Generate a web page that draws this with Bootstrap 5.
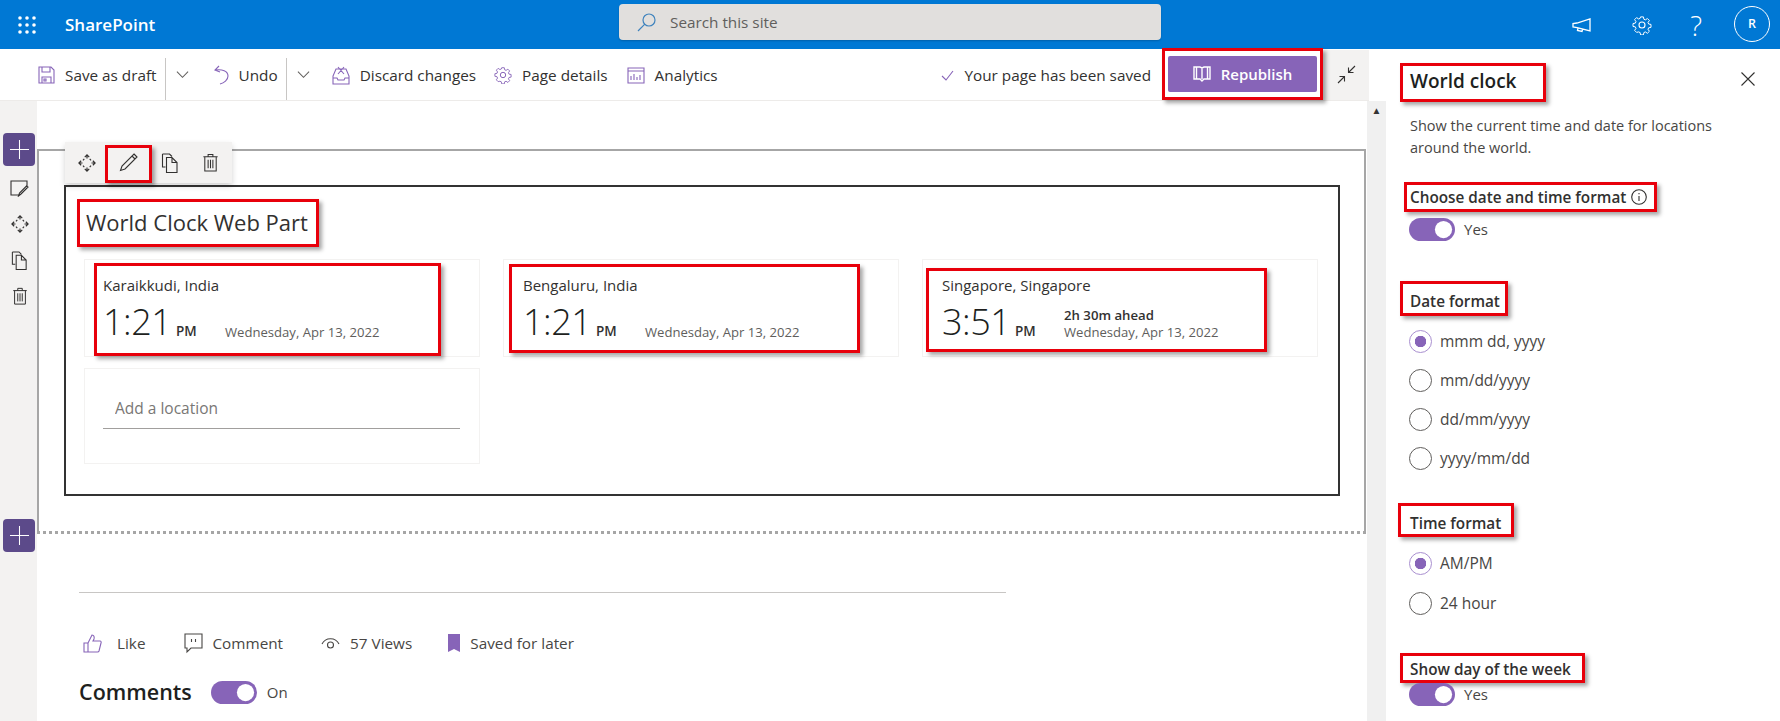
<!DOCTYPE html>
<html lang="en">
<head>
<meta charset="utf-8">
<title>World clock</title>
<link href="https://cdn.jsdelivr.net/npm/bootstrap@5.3.0/dist/css/bootstrap.min.css" rel="stylesheet">
<style>
html,body{height:721px;overflow:hidden;background:#fff}
body{font-family:"Open Sans","Noto Sans",sans-serif;color:#323130;font-size:14px}
svg{display:block;flex:none;fill:none;stroke:currentColor;stroke-width:1.1}
.sp-top{height:49px;background:#0078d4;color:#fff}
.sp-waffle{margin-left:18px;width:18px;height:18px;fill:#fff;stroke:none}
.sp-brand{margin-left:29px;font-size:17px;font-weight:600;width:200px;color:#fff}
.sp-search{margin-left:354px;margin-top:-5px;width:542px;height:36px;background:#e1dfdd;border-radius:4px;padding-left:18px;gap:14px;color:#605e5c;font-size:15.3px;box-shadow:0 1px 2px rgba(0,0,0,.2)}
.sp-search svg{color:#3f83bd;stroke-width:1.2}
.sp-topicons{margin-left:auto;padding-right:10px;gap:0}
.sp-ti1{margin-right:40px}
.sp-ti2{margin-right:38px}
.sp-ti3{margin-right:32px}
.sp-avatar{width:36px;height:36px;border:1px solid #fff;border-radius:50%;font-size:12.5px;font-weight:600;margin-top:-1px}
.sp-work{height:672px}
.sp-left{width:1386px}
.sp-bar{height:52px;width:1369px;border-bottom:1px solid #edebe9;padding-left:38px;font-size:15.3px}
.sp-bar svg{color:#8764b8}
.sp-tb{gap:10px;white-space:nowrap;padding-top:1px}
.sp-div{width:1px;height:42px;background:#c8c6c4;align-self:flex-end;margin-bottom:0}
.sp-chev{color:#605e5c !important}
.m-a{margin-left:8px}.m-c{margin-left:10px}.m-f{margin-left:25px}.m-f2{margin-left:22px}.m-g{margin-left:18px}.m-h{margin-left:19px}.m-i{margin-left:auto}
.sp-save{color:#323130}
.sp-redbar{width:161px;height:52px;border:3px solid #e8000b;margin-left:11px;margin-top:-1px;box-shadow:3px 3px 4px rgba(0,0,0,.35);position:relative;z-index:2;background:#fff}
.sp-btnpub{width:149px;height:36px;padding:0;background:#8764b8;border:0;border-radius:2px;color:#fff;font-weight:600;font-size:15px;gap:10px}
.sp-btnpub:hover{background:#8764b8;color:#fff}
.sp-bar .sp-btnpub svg{color:#fff}
.sp-shrink{width:46px;height:50px;background:#f3f2f1;color:#323130}
.sp-bar .sp-shrink svg{color:#323130}
.sp-canvasrow{height:620px}
.sp-rail{width:37px;background:#f3f2f1;padding-top:32px;color:#323130}
.sp-plus{width:32px;height:33px;background:#5c4a8a;border-radius:4px;margin-left:3px;color:#fff}
.sp-railicon{height:36px;width:37px;padding-left:2px}
.sp-plus2{margin-top:205px}
.sp-main{width:1330px}
.sp-section{margin-top:48px;height:385px;width:1329px;border:2px solid #a6a6a6;border-bottom:3px dotted #a6a6a6;position:relative}
.sp-float{position:absolute;left:26px;top:-9px;width:167px;height:41px;background:#f3f2f1;box-shadow:0 3px 6px rgba(0,0,0,.18);z-index:3}
.sp-floatbtn{width:41px;height:41px}
.sp-floatbtn-first{width:43px}
.sp-floatred{width:47px;height:38px;border:3px solid #e8000b;margin:3px -3px 0 -3px;box-shadow:3px 3px 4px rgba(0,0,0,.35);background:#f3f2f1;padding-bottom:4px}
.sp-wp{margin:34px 0 0 25px;width:1276px;height:311px;border:2px solid #333;padding:12px 0 0 11px}
.sp-titlebox{width:242px;height:48px;border:3px solid #e8000b;box-shadow:3px 3px 4px rgba(0,0,0,.35);padding-left:6px;font-size:22px;line-height:40px;color:#323130}
.sp-grid{display:grid;grid-template-columns:repeat(3,396px);column-gap:23px;row-gap:11px;margin:12px 0 0 7px}
.sp-card{height:98px;border:1px solid #f3f2f1;border-radius:0}
.sp-clock{border:3px solid #e8000b;box-shadow:3px 3px 4px rgba(0,0,0,.35);background:#fff}
.sp-c1{margin:3px 0 0 9px;width:347px;height:96px;padding:9px 0 0 6px}
.sp-c2{margin:4px 0 0 5px;width:351px;height:89px;padding:8px 0 0 11px}
.sp-c3{margin:8px 0 0 3px;width:341px;height:84px;padding:4px 0 0 13px}
.sp-city{line-height:20px;font-size:15px;color:#323130}
.sp-timerow{margin-top:7px;height:40px}
.sp-time{font-size:36px;font-weight:300;line-height:40px;width:73px;color:#201f1e;letter-spacing:-.5px}
.sp-ampm{font-size:13.5px;font-weight:600;width:49px;line-height:16px;padding-bottom:3px}
.sp-date{font-size:13.1px;color:#605e5c;line-height:17px;padding-bottom:1px}
.sp-ahead{font-size:13.2px;font-weight:600;line-height:17px;color:#323130}
.sp-addcard{height:96px;padding:29px 19px 0 18px}
.sp-addcard .form-control{height:31px;border:0;border-bottom:1px solid #a19f9d;border-radius:0;padding:0 0 10px 12px;font-size:15.5px;color:#323130;box-shadow:none}
.sp-addcard .form-control::placeholder{color:#797775;opacity:1}
.sp-rule{margin:58px 0 0 42px;width:927px;height:1px;background:#c8c6c4}
.sp-social{margin:40px 0 0 46px;height:20px;font-size:15.3px;color:#484644}
.sp-social svg{color:#484644}
.sp-social .sp-like{color:#8764b8}
.sp-sg1{margin-left:15px}.sp-sg2{margin-left:39px}.sp-sg3{margin-left:9px}.sp-sg4{margin-left:38px}.sp-sg5{margin-left:10px}.sp-sg6{margin-left:36px}.sp-sg7{margin-left:10px}
.sp-comments{margin:27px 0 0 42px;height:24px;font-size:21.5px;font-weight:600;color:#201f1e}
.sp-comments .form-switch.sp-sw{margin:0 0 0 19px}
.sp-on{font-size:15px;font-weight:400;color:#484644;margin-left:10px}
.sp-scroll{width:19px;background:#f0f0f0;margin-top:0;font-size:10px;padding-top:4px;color:#333;line-height:10px}
.sp-panel{width:394px;padding:0}
.sp-panelhead{padding:14px 0 0 14px;position:relative}
.sp-h1box{width:146px;height:39px;border:3px solid #e8000b;box-shadow:3px 3px 4px rgba(0,0,0,.35);padding-left:7px;font-size:19px;font-weight:600;line-height:31px;color:#201f1e;white-space:nowrap}
.sp-x{margin-left:auto;margin-right:25px;margin-top:9px;color:#323130;width:14px;height:14px}
.sp-desc{margin:13px 0 0 24px;width:350px;font-size:14.5px;line-height:22px;color:#484644}
.sp-lab{border:3px solid #e8000b;box-shadow:3px 3px 4px rgba(0,0,0,.35);font-weight:600;font-size:15.3px;color:#323130;white-space:nowrap}
.sp-l1{margin:23px 0 0 18px;width:253px;height:30px;padding:0 0 0 3px;line-height:24px;gap:5px}
.sp-l2{margin:40px 0 0 14px;width:108px;height:35px;padding:5px 0 0 7px;line-height:24px}
.sp-l3{margin:33px 0 0 12px;width:116px;height:34px;padding:5px 0 0 9px;line-height:24px}
.sp-l4{margin:38px 0 0 14px;width:185px;height:30px;padding:3px 0 0 7px;line-height:20px}
.sp-l1 svg{color:#323130}
.form-switch.sp-sw{padding-left:0;margin:0;min-height:0;gap:9px}
.form-switch.sp-sw .form-check-input{width:46px;height:23px;margin:0;background-color:#8764b8;border:0;box-shadow:none;flex:none;float:none}
.sp-swtext{font-size:15px;color:#484644}
.form-switch.sp-s1{margin:6px 0 0 23px}
.form-switch.sp-s2{margin:0 0 0 23px}
.sp-radios{margin:14px 0 0 23px;gap:16px}
.sp-radios2{margin:15px 0 0 23px;gap:17px}
.sp-radio{padding:0;margin:0;min-height:23px;gap:8px;font-size:15.5px;color:#484644;line-height:23px}
.sp-radio .form-check-input{width:23px;height:23px;margin:0;float:none;flex:none;background-color:#fff;border:1.5px solid #605e5c;box-shadow:none;background-image:none}
.sp-radio .form-check-input:checked{background-color:#fff;border-color:#a98fd0;background-image:radial-gradient(circle,#8764b8 0 5.5px,#fff 6px)}
</style>
</head>
<body>
<svg width="0" height="0" style="position:absolute">
<symbol id="ic-move" viewBox="0 0 20 20"><path d="M10 1v4M7.500 3.500L10 1l2.500 2.500M10 15v4M7.500 16.500L10 19l2.500-2.500M1 10h4M3.500 7.500L1 10l2.500 2.500M15 10h4M16.500 7.500L19 10l-2.500 2.500M5.500 7l1.500-1.500M13 5.500L14.500 7M5.500 13L7 14.500M14.500 13L13 14.500" stroke-width="1.300"/></symbol>
<symbol id="ic-copy" viewBox="0 0 20 20"><path d="M2.500 1h7l2.500 2.500M2.500 1v13h3M6.500 4.500h5.500l5 5v10H6.500zM12 4.500v5h5"/></symbol>
<symbol id="ic-trash" viewBox="0 0 20 20"><path d="M2.500 4h15M7.500 4V1.500h5V4M4 4v15h12V4M7.500 7v9M10 7v9M12.500 7v9"/></symbol>
<symbol id="ic-plus" viewBox="0 0 20 20"><path d="M10 0v20M0 10h20"/></symbol>
<symbol id="ic-gear" viewBox="0 0 20 20"><path d="M8.400 1h3.200l.5 2.600 1.700.7 2.200-1.500 2.200 2.200-1.500 2.200.7 1.700 2.600.5v3.200l-2.600.5-.7 1.700 1.500 2.200-2.200 2.200-2.200-1.500-1.700.7-.5 2.600H8.400l-.5-2.600-1.700-.7L4 18.200 1.800 16l1.500-2.200-.7-1.700L0 11.600V8.400l2.600-.5.7-1.700L1.800 4 4 1.800l2.200 1.500 1.700-.7z" transform="translate(1 1) scale(.9)"/><circle cx="10" cy="10" r="3"/></symbol>
<symbol id="ic-chev" viewBox="0 0 14 14"><path d="M1 4l6 6 6-6"/></symbol>
</svg>

<header class="sp-top d-flex align-items-center">
  <svg class="sp-waffle" viewBox="0 0 18 18"><circle cx="2" cy="2" r="1.800"/><circle cx="9" cy="2" r="1.800"/><circle cx="16" cy="2" r="1.800"/><circle cx="2" cy="9" r="1.800"/><circle cx="9" cy="9" r="1.800"/><circle cx="16" cy="9" r="1.800"/><circle cx="2" cy="16" r="1.800"/><circle cx="9" cy="16" r="1.800"/><circle cx="16" cy="16" r="1.800"/></svg>
  <a class="sp-brand text-decoration-none">SharePoint</a>
  <div class="sp-search d-flex align-items-center">
    <svg width="19" height="19" viewBox="0 0 19 19"><circle cx="12" cy="7" r="6"/><path d="M7.800 11.200L1 18"/></svg>
    <span>Search this site</span>
  </div>
  <div class="sp-topicons d-flex align-items-center">
    <svg class="sp-ti1" width="20" height="16" viewBox="0 0 20 16"><path d="M1 6.500v3.500l4 .6 13 3.400V2L5 6z M6 11l-.5 2.500 4.500 1 .7-2.600" stroke-width="1.300"/></svg>
    <svg class="sp-ti2" width="20" height="20" stroke-width="1.200"><use href="#ic-gear"/></svg>
    <span class="sp-ti3 fs-3 fw-light lh-1">?</span>
    <div class="sp-avatar d-flex align-items-center justify-content-center">R</div>
  </div>
</header>

<div class="sp-work d-flex">
  <div class="sp-left d-flex flex-column">
    <div class="sp-bar d-flex align-items-center">
      <div class="sp-tb d-flex align-items-center"><svg width="17" height="18" viewBox="0 0 17 18"><path d="M1 1h12l3 3v13H1zM4 1v5h8V1M4 17v-6h9v6M6 13h2v2H6z"/></svg><span>Save as draft</span></div>
      <div class="sp-div m-a"></div>
      <svg class="sp-chev m-c" width="13" height="13"><use href="#ic-chev"/></svg>
      <div class="sp-tb d-flex align-items-center m-f"><svg width="15" height="20" viewBox="0 0 15 20"><path d="M5 1L1 5l5 2M1.500 5C8 4 14 6 14 11c0 4-4 7-8 8"/></svg><span>Undo</span></div>
      <div class="sp-div m-a"></div>
      <svg class="sp-chev m-c" width="13" height="13"><use href="#ic-chev"/></svg>
      <div class="sp-tb d-flex align-items-center m-f2"><svg width="18" height="19" viewBox="0 0 18 19"><path d="M1 18V10l3-7h10l3 7v8zM1 12h4l1 2h6l1-2h4M6 1l6 7M12 1L6 8"/></svg><span>Discard changes</span></div>
      <div class="sp-tb d-flex align-items-center m-g"><svg width="18" height="18"><use href="#ic-gear"/></svg><span>Page details</span></div>
      <div class="sp-tb d-flex align-items-center m-h"><svg width="18" height="17" viewBox="0 0 18 17"><path d="M1 1h16v15H1zM1 4h16M4 13V9M7 13V7M10 13v-3M13 13V8"/></svg><span>Analytics</span></div>
      <div class="sp-tb d-flex align-items-center m-i"><svg width="13" height="11" viewBox="0 0 13 11"><path d="M1 6l4 4 7-9"/></svg><span class="sp-save">Your page has been saved</span></div>
      <div class="sp-redbar d-flex align-items-center justify-content-center">
        <button class="btn sp-btnpub d-flex align-items-center justify-content-center" type="button"><svg width="18" height="16" viewBox="0 0 18 16"><path d="M1 1h6l2 1 2-1h6v12h-6l-2 2-2-2H1zM9 2v11M3.500 1v12M14.500 1v12" stroke-width="1.400"/></svg>Republish</button>
      </div>
      <div class="sp-shrink d-flex align-items-center justify-content-center"><svg width="19" height="19" viewBox="0 0 19 19"><path d="M18 1l-6.500 6.500M11.500 2.500v5h5M1 18l6.500-6.500M7.500 16.500v-5h-5"/></svg></div>
    </div>
    <div class="sp-canvasrow d-flex">
      <aside class="sp-rail d-flex flex-column">
        <div class="sp-plus d-flex align-items-center justify-content-center"><svg width="19" height="19"><use href="#ic-plus"/></svg></div>
        <div class="sp-railicon d-flex align-items-center justify-content-center mt-1"><svg width="19" height="17" viewBox="0 0 19 17"><path d="M9 15H1V1h16v5M18 7l-7 7-2.500 2 1-3 7-7z"/></svg></div>
        <div class="sp-railicon d-flex align-items-center justify-content-center"><svg width="18" height="18"><use href="#ic-move"/></svg></div>
        <div class="sp-railicon d-flex align-items-center justify-content-center"><svg width="19" height="19"><use href="#ic-copy"/></svg></div>
        <div class="sp-railicon d-flex align-items-center justify-content-center"><svg width="18" height="18"><use href="#ic-trash"/></svg></div>
        <div class="sp-plus sp-plus2 d-flex align-items-center justify-content-center"><svg width="19" height="19"><use href="#ic-plus"/></svg></div>
      </aside>
      <main class="sp-main">
        <section class="sp-section">
          <div class="sp-float d-flex align-items-center">
            <div class="sp-floatbtn sp-floatbtn-first d-flex align-items-center justify-content-center"><svg width="18" height="18"><use href="#ic-move"/></svg></div>
            <div class="sp-floatred d-flex align-items-center justify-content-center"><svg width="20" height="20" viewBox="0 0 20 20"><path d="M15 2l3 3L6 17l-4.500 1.500L3 14zM13 4l3 3"/></svg></div>
            <div class="sp-floatbtn d-flex align-items-center justify-content-center"><svg width="20" height="20"><use href="#ic-copy"/></svg></div>
            <div class="sp-floatbtn d-flex align-items-center justify-content-center"><svg width="19" height="19"><use href="#ic-trash"/></svg></div>
          </div>
          <div class="sp-wp">
            <div class="sp-titlebox">World Clock Web Part</div>
            <div class="sp-grid">
              <div class="card sp-card"><div class="sp-clock sp-c1">
                <div class="sp-city">Karaikkudi, India</div>
                <div class="sp-timerow d-flex align-items-end"><span class="sp-time">1:21</span><span class="sp-ampm">PM</span><div class="sp-date">Wednesday, Apr 13, 2022</div></div>
              </div></div>
              <div class="card sp-card"><div class="sp-clock sp-c2">
                <div class="sp-city">Bengaluru, India</div>
                <div class="sp-timerow d-flex align-items-end"><span class="sp-time">1:21</span><span class="sp-ampm">PM</span><div class="sp-date">Wednesday, Apr 13, 2022</div></div>
              </div></div>
              <div class="card sp-card"><div class="sp-clock sp-c3">
                <div class="sp-city">Singapore, Singapore</div>
                <div class="sp-timerow d-flex align-items-end"><span class="sp-time">3:51</span><span class="sp-ampm">PM</span><div class="sp-date"><div class="sp-ahead">2h 30m ahead</div>Wednesday, Apr 13, 2022</div></div>
              </div></div>
              <div class="card sp-card sp-addcard"><input class="form-control" type="text" placeholder="Add a location"></div>
            </div>
          </div>
        </section>
        <div class="sp-rule"></div>
        <div class="sp-social d-flex align-items-center">
          <svg class="sp-like" width="19" height="19" viewBox="0 0 19 19"><path d="M1 9h4v9H1zM5 9l4-8c2 0 2.500 2 2 4l-1 2h7c1 0 1.500 1 1 2l-2 8c-.2.700-.8 1-1.500 1H5"/></svg>
          <span class="sp-sg1">Like</span>
          <svg class="sp-sg2" width="19" height="21" viewBox="0 0 19 21"><path d="M1 1h17v14H7l-4 4v-4H1zM7.500 6v3M11.500 6v3"/></svg>
          <span class="sp-sg3">Comment</span>
          <svg class="sp-sg4" width="19" height="14" viewBox="0 0 19 14"><path d="M1 8a9.500 9.500 0 0 1 17 0"/><circle cx="9.500" cy="9" r="3"/></svg>
          <span class="sp-sg5">57 Views</span>
          <svg class="sp-sg6" width="12" height="18" viewBox="0 0 12 18" style="fill:#8764b8;stroke:none"><path d="M0 0h12v18l-6-3-6 3z"/></svg>
          <span class="sp-sg7">Saved for later</span>
        </div>
        <div class="sp-comments d-flex align-items-center">
          <span>Comments</span>
          <div class="form-check form-switch sp-sw d-flex align-items-center"><input class="form-check-input" type="checkbox" checked aria-label="Comments on"></div>
          <span class="sp-on">On</span>
        </div>
      </main>
      <div class="sp-scroll text-center">&#9650;</div>
    </div>
  </div>
  <aside class="sp-panel">
    <div class="sp-panelhead d-flex">
      <div class="sp-h1box">World clock</div>
      <svg class="sp-x" viewBox="0 0 14 14"><path d="M.5.500l13 13M13.500.500l-13 13"/></svg>
    </div>
    <p class="sp-desc mb-0">Show the current time and date for locations around the world.</p>
    <div class="sp-lab sp-l1 d-flex align-items-center">Choose date and time format <svg width="16" height="16" viewBox="0 0 16 16"><circle cx="8" cy="8" r="7.300"/><path d="M8 7v5M8 4v1.200"/></svg></div>
    <div class="form-check form-switch sp-sw sp-s1 d-flex align-items-center"><input class="form-check-input" type="checkbox" checked id="t1"><label class="sp-swtext" for="t1">Yes</label></div>
    <div class="sp-lab sp-l2">Date format</div>
    <div class="sp-radios d-flex flex-column">
      <div class="form-check sp-radio d-flex align-items-center"><input class="form-check-input" type="radio" name="d" id="d1" checked><label for="d1">mmm dd, yyyy</label></div>
      <div class="form-check sp-radio d-flex align-items-center"><input class="form-check-input" type="radio" name="d" id="d2"><label for="d2">mm/dd/yyyy</label></div>
      <div class="form-check sp-radio d-flex align-items-center"><input class="form-check-input" type="radio" name="d" id="d3"><label for="d3">dd/mm/yyyy</label></div>
      <div class="form-check sp-radio d-flex align-items-center"><input class="form-check-input" type="radio" name="d" id="d4"><label for="d4">yyyy/mm/dd</label></div>
    </div>
    <div class="sp-lab sp-l3">Time format</div>
    <div class="sp-radios2 d-flex flex-column">
      <div class="form-check sp-radio d-flex align-items-center"><input class="form-check-input" type="radio" name="t" id="h1" checked><label for="h1">AM/PM</label></div>
      <div class="form-check sp-radio d-flex align-items-center"><input class="form-check-input" type="radio" name="t" id="h2"><label for="h2">24 hour</label></div>
    </div>
    <div class="sp-lab sp-l4">Show day of the week</div>
    <div class="form-check form-switch sp-sw sp-s2 d-flex align-items-center"><input class="form-check-input" type="checkbox" checked id="t2"><label class="sp-swtext" for="t2">Yes</label></div>
  </aside>
</div>
<script src="https://cdn.jsdelivr.net/npm/bootstrap@5.3.0/dist/js/bootstrap.bundle.min.js"></script>
</body>
</html>
